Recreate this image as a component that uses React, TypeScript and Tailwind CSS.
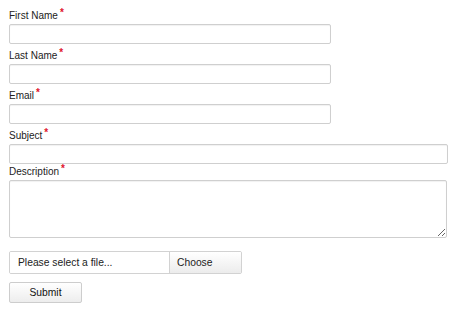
import React from 'react';

const font = { fontFamily: '"Liberation Sans", Arial, sans-serif' };

const Label: React.FC<{ text: string }> = ({ text }) => (
  <label className="block h-[16px] text-[10px] leading-[16px] text-[#222]">
    {text}
    <span className="relative -top-[3px] ml-[2px] text-[10px] font-bold text-[#e0142b]">*</span>
  </label>
);

const inputCls =
  'block h-[20px] rounded-[2px] border border-[#cfcfcf] bg-white px-1 text-[10px] outline-none shadow-[inset_0_1px_1px_rgba(0,0,0,0.06)]';

export default function App() {
  return (
    <div className="h-[311px] w-[474px] bg-white pl-[9px] pt-[8px]" style={font}>
      <form onSubmit={(e) => e.preventDefault()}>
        <Label text="First Name" />
        <input type="text" className={`${inputCls} mb-[4px] w-[322px]`} />
        <Label text="Last Name" />
        <input type="text" className={`${inputCls} mb-[4px] w-[322px]`} />
        <Label text="Email" />
        <input type="email" className={`${inputCls} mb-[4px] w-[322px]`} />
        <Label text="Subject" />
        <input type="text" className={`${inputCls} w-[439px]`} />
        <Label text="Description" />
        <textarea className="block h-[58px] w-[438px] rounded-[2px] border border-[#cfcfcf] bg-white px-1 text-[10px] outline-none shadow-[inset_0_1px_1px_rgba(0,0,0,0.06)]" />

        <div className="mt-[13px] flex h-[23px] w-[233px] overflow-hidden rounded-[2px] border border-[#d2d2d2] text-[10.3px] text-[#222]">
          <div className="flex flex-1 items-center bg-white pl-[8px]">Please select a file...</div>
          <div className="flex w-[72px] items-center border-l border-[#d2d2d2] bg-gradient-to-b from-white to-[#ececec] pl-[7px]">
            Choose
          </div>
        </div>

        <button
          type="submit"
          className="mt-[8px] block h-[21px] w-[73px] rounded-[2px] border border-[#cdcdcd] bg-gradient-to-b from-white to-[#ededed] text-center text-[10.3px] text-[#111]"
        >
          Submit
        </button>
      </form>
    </div>
  );
}
